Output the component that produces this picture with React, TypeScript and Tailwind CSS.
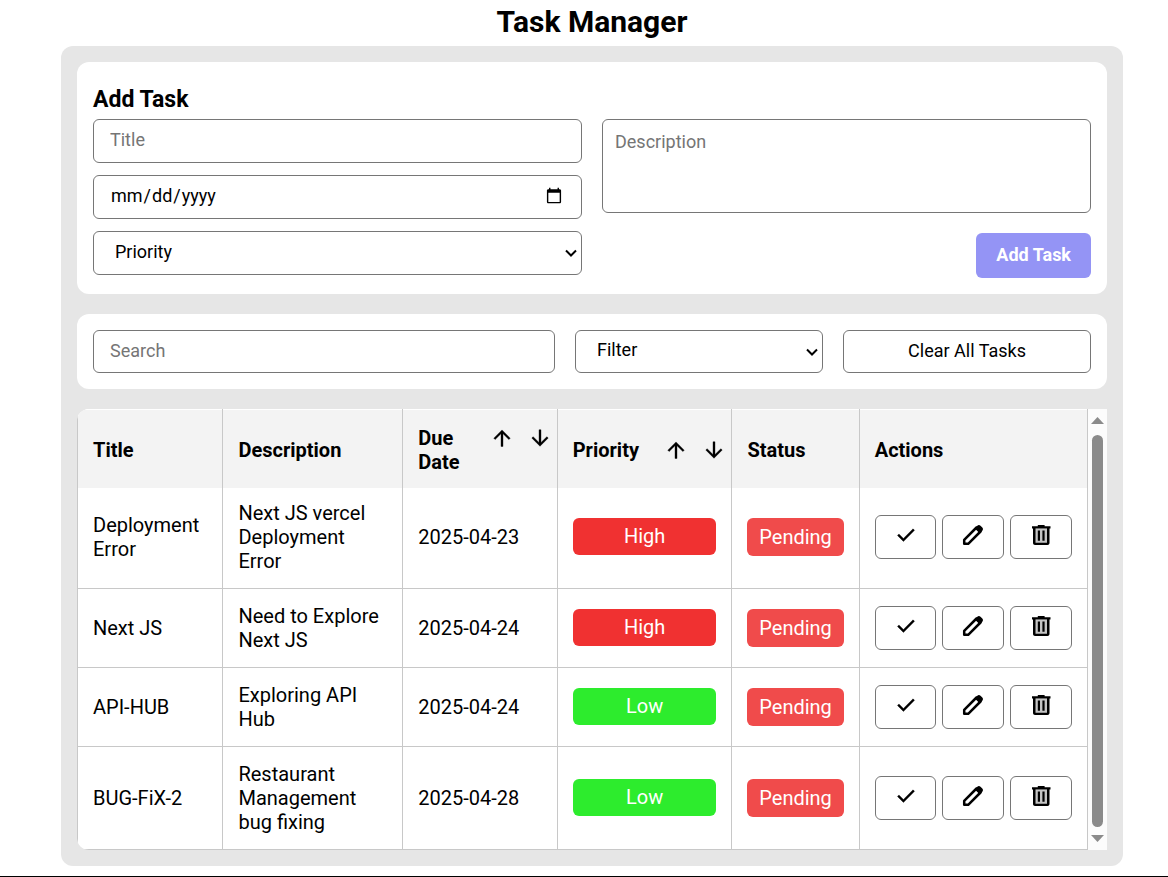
import { useState, type ReactNode } from "react";

type Priority = "High" | "Low";

interface Task {
  title: string;
  description: string;
  due: string;
  priority: Priority;
  status: string;
}

const tasks: Task[] = [
  { title: "Deployment Error", description: "Next JS vercel Deployment Error", due: "2025-04-23", priority: "High", status: "Pending" },
  { title: "Next JS", description: "Need to Explore Next JS", due: "2025-04-24", priority: "High", status: "Pending" },
  { title: "API-HUB", description: "Exploring API Hub", due: "2025-04-24", priority: "Low", status: "Pending" },
  { title: "BUG-FiX-2", description: "Restaurant Management bug fixing", due: "2025-04-28", priority: "Low", status: "Pending" },
];

const priorityColor: Record<Priority, string> = {
  High: "bg-[#f03131]",
  Low: "bg-[#2dec2d]",
};

const field = "block w-full rounded-md border border-[#767676] bg-white text-lg text-black placeholder:text-[#757575]";

function Icon({ d }: { d: string }) {
  return (
    <svg viewBox="0 -960 960 960" className="size-6" fill="currentColor" stroke="currentColor" strokeWidth="14" aria-hidden="true">
      <path d={d} />
    </svg>
  );
}

const UP = "M440-140v-510L206-416l-56-57 330-330 330 330-56 57-234-234v510h-80Z";
const DOWN = "M440-810v510L206-534l-56 57 330 330 330-330-56-57-234 234v-510h-80Z";
const CHECK = "M378-222 138-462l60-60 180 180 384-384 60 60-444 444Z";

function EditIcon() {
  return (
    <svg viewBox="0 0 24 24" className="size-6" aria-hidden="true">
      <path d="M3.200 20.800v-4L15.500 4.500l4 4L7.200 20.800z" fill="white" stroke="black" strokeWidth="2.500" strokeLinejoin="round" />
      <path d="M13.600 5.200l2.700-2.500c.9-.9 2.300-.9 3.200 0l1.800 1.800c.9.9.9 2.300 0 3.200l-2.500 2.700z" fill="black" />
    </svg>
  );
}

function TrashIcon() {
  return (
    <svg viewBox="0 0 24 24" className="size-6" aria-hidden="true">
      <path d="M6 5.500h12.500v14.500H6z" fill="#c4c4c4" />
      <path
        d="M6 22c-1.100 0-2-.9-2-2V5.500H3V3.200h5.800V2h6.800v1.200h5.900v2.300h-1V20c0 1.100-.9 2-2 2H6ZM18 5.500H6.500v14.300H18V5.500ZM8.800 17.800h2.200V7.500H8.800v10.300Zm4.600 0h2.200V7.500h-2.200v10.300Z"
        fill="black"
      />
    </svg>
  );
}

function ActionButton({ label, children }: { label: string; children: ReactNode }) {
  return (
    <button type="button" aria-label={label} className="flex h-11 flex-1 items-start justify-center rounded-md border border-[#767676] bg-white pt-[7px]">
      {children}
    </button>
  );
}

function SelectField({ label, options, className }: { label: string; options: string[]; className: string }) {
  return (
    <div className="relative">
      <select aria-label={label} defaultValue="" className={`${field} appearance-none px-[21px] pb-[3px] ${className}`}>
        <option value="">{label}</option>
        {options.map((o) => (
          <option key={o}>{o}</option>
        ))}
      </select>
      <svg
        viewBox="0 0 12 8"
        className="pointer-events-none absolute inset-y-0 right-[5px] my-auto h-2 w-3"
        fill="none"
        stroke="black"
        strokeWidth="2"
        aria-hidden="true"
      >
        <path d="M1 1.500l5 5 5-5" />
      </svg>
    </div>
  );
}

function SortButtons({ name }: { name: string }) {
  return (
    <span className="flex gap-[14px]">
      <button type="button" aria-label={`Sort ${name} ascending`}>
        <Icon d={UP} />
      </button>
      <button type="button" aria-label={`Sort ${name} descending`}>
        <Icon d={DOWN} />
      </button>
    </span>
  );
}

export default function App() {
  const [search, setSearch] = useState("");
  const cell = "border-x border-b border-[#c8c8c8] px-[15px] pb-[15px]";
  const head = "border-x border-t border-x-[#c8c8c8] border-t-white px-[15px] pt-[2px] text-left font-bold";

  return (
    <main className="border-b border-black bg-white pr-[45px] pb-[10px] pl-[61px] font-['Roboto',sans-serif] text-black">
      <h1 className="pt-1 pb-[6px] text-center text-[30px] leading-9 font-bold">Task Manager</h1>
      <div className="flex flex-col gap-5 rounded-xl bg-[#e6e6e6] p-4">
        <section className="rounded-xl bg-white p-4">
          <h2 className="pt-2 pb-[5px] text-[23px] leading-7 font-bold">Add Task</h2>
          <form className="grid grid-cols-2 gap-5" onSubmit={(e) => e.preventDefault()}>
            <div className="flex flex-col gap-3">
              <input aria-label="Title" placeholder="Title" className={`${field} h-11 px-4 pb-1`} />
              <input type="date" aria-label="Due date" className={`${field} h-11 px-4 pb-[2px]`} />
              <SelectField label="Priority" options={["High", "Medium", "Low"]} className="h-11" />
            </div>
            <div className="flex flex-col items-end gap-5">
              <textarea aria-label="Description" placeholder="Description" className={`${field} h-[94px] resize-none px-3 py-2`} />
              <button type="submit" className="h-[45px] rounded-md bg-[#9494f5] px-5 pb-[2px] text-lg font-bold text-white">
                Add Task
              </button>
            </div>
          </form>
        </section>

        <section className="grid grid-cols-[462fr_248fr_248fr] gap-5 rounded-xl bg-white p-4">
          <input
            aria-label="Search"
            placeholder="Search"
            value={search}
            onChange={(e) => setSearch(e.target.value)}
            className={`${field} h-[43px] px-4 pb-[2px]`}
          />
          <SelectField label="Filter" options={["Completed", "Pending"]} className="h-[43px]" />
          <button type="button" className={`${field} h-[43px] pb-[2px]`}>
            Clear All Tasks
          </button>
        </section>

        <section className="flex overflow-hidden rounded-l-xl bg-white">
          <table className="flex-1 table-fixed border-collapse text-[20px] leading-6">
            <colgroup>
              <col className="w-[14.4%]" />
              <col className="w-[17.8%]" />
              <col className="w-[15.3%]" />
              <col className="w-[17.3%]" />
              <col className="w-[12.6%]" />
              <col />
            </colgroup>
            <thead>
              <tr className="h-[78px] bg-[#f3f3f3]">
                <th className={head}>Title</th>
                <th className={head}>Description</th>
                <th className={head}>
                  <div className="-mr-[10px] flex items-start justify-between">
                    <span className="w-12">Due Date</span>
                    <SortButtons name="due date" />
                  </div>
                </th>
                <th className={head}>
                  <div className="-mr-[10px] flex items-center justify-between">
                    Priority
                    <SortButtons name="priority" />
                  </div>
                </th>
                <th className={head}>Status</th>
                <th className={head}>Actions</th>
              </tr>
            </thead>
            <tbody>
              {tasks.map((t, i) => {
                const td = i === 0 ? `${cell} pt-[13px]` : `${cell} pt-[15px]`;
                return (
                  <tr key={t.title} className="h-[79px]">
                    <td className={td}>{t.title}</td>
                    <td className={td}>{t.description}</td>
                    <td className={td}>{t.due}</td>
                    <td className={td}>
                      <div className={`h-[37px] rounded-md py-[6px] text-center text-white ${priorityColor[t.priority]}`}>{t.priority}</div>
                    </td>
                    <td className={td}>
                      <div className="rounded-md bg-[#f04b4b] py-[7px] text-center text-white">{t.status}</div>
                    </td>
                    <td className={td}>
                      <div className="flex gap-[6px]">
                        <ActionButton label="Complete">
                          <Icon d={CHECK} />
                        </ActionButton>
                        <ActionButton label="Edit">
                          <EditIcon />
                        </ActionButton>
                        <ActionButton label="Delete">
                          <TrashIcon />
                        </ActionButton>
                      </div>
                    </td>
                  </tr>
                );
              })}
            </tbody>
          </table>
          <div className="flex w-[19px] shrink-0 flex-col items-center bg-[#fcfcfc] py-2" aria-hidden="true">
            <svg viewBox="0 0 13 7" className="h-[7px] w-[13px]" fill="#8b8b8b">
              <path d="M0 7L6.500 0 13 7z" />
            </svg>
            <div className="mt-[11px] mb-2 w-[11px] flex-1 rounded-full bg-[#8b8b8b]" />
            <svg viewBox="0 0 13 7" className="h-[7px] w-[13px]" fill="#8b8b8b">
              <path d="M0 0h13L6.500 7z" />
            </svg>
          </div>
        </section>
      </div>
    </main>
  );
}
